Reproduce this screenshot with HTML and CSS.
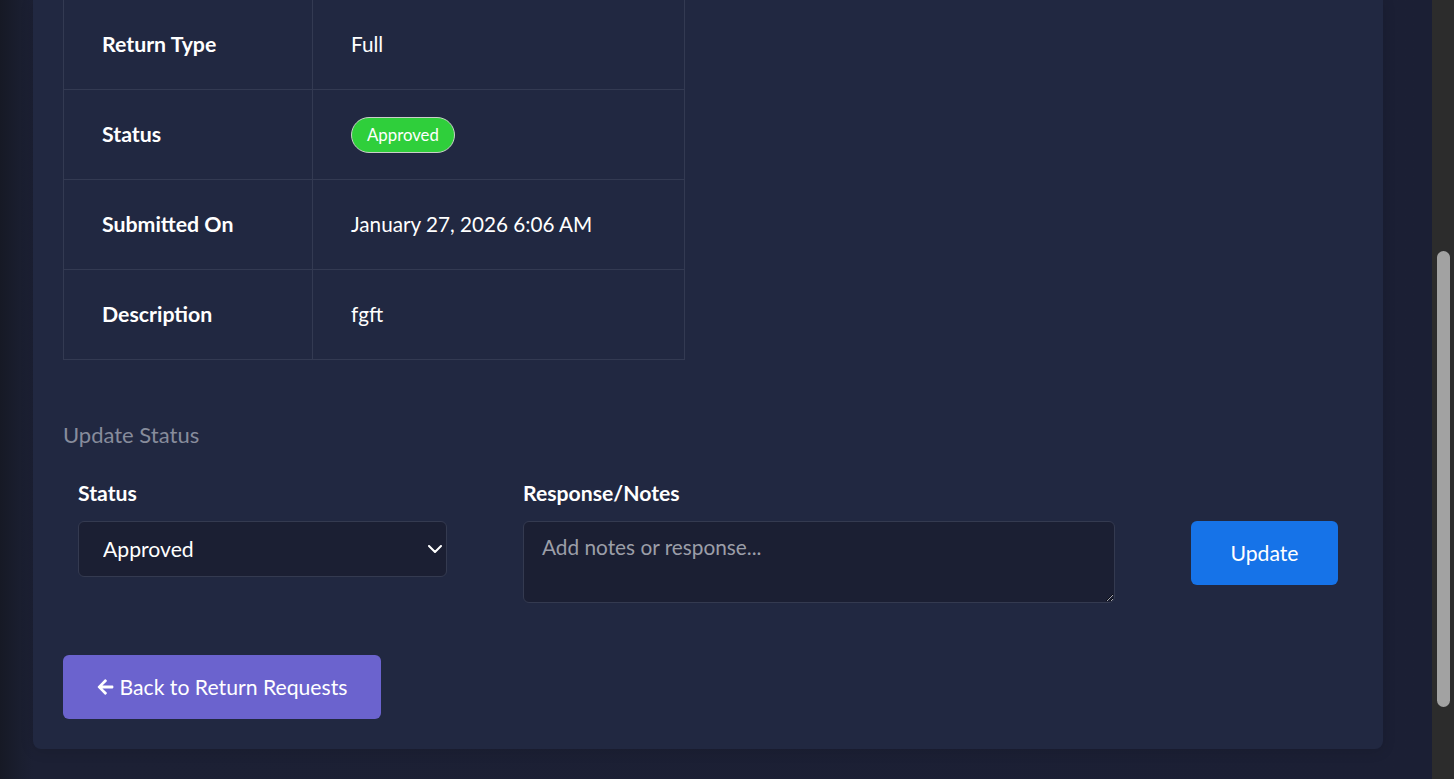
FILE: index.html
```html
<!DOCTYPE html>
<html lang="en">
<head>
<meta charset="utf-8">
<title>Return Request</title>
<link rel="stylesheet" href="styles.css">
</head>
<body>
<div class="page">
  <main class="main">
    <section class="card">
      <table class="detail-table">
        <tbody>
          <tr><td class="key">Return Type</td><td class="val">Full</td></tr>
          <tr><td class="key">Status</td><td class="val"><span class="badge">Approved</span></td></tr>
          <tr><td class="key">Submitted On</td><td class="val">January 27, 2026 6:06 AM</td></tr>
          <tr><td class="key">Description</td><td class="val">fgft</td></tr>
        </tbody>
      </table>

      <h5 class="section-title">Update Status</h5>

      <form class="form-row">
        <div class="field field-status">
          <label class="label" for="status">Status</label>
          <div class="select-wrap">
            <select id="status" class="select">
              <option>Pending</option>
              <option selected>Approved</option>
              <option>Rejected</option>
            </select>
            <svg class="chevron" width="14" height="8" viewBox="0 0 14 8"><path d="M1 1l6 6 6-6" fill="none" stroke="#fff" stroke-width="2" stroke-linecap="round" stroke-linejoin="round"/></svg>
          </div>
        </div>
        <div class="field field-notes">
          <label class="label" for="notes">Response/Notes</label>
          <textarea id="notes" class="textarea" rows="2" placeholder="Add notes or response..."></textarea>
        </div>
        <div class="field field-action">
          <button type="button" class="btn btn-primary">Update</button>
        </div>
      </form>

      <div class="back-row">
        <a class="btn btn-back" href="#"><svg class="arrow" width="17" height="18" viewBox="0 0 448 512"><path fill="#fff" d="M257.5 445.1l-22.2 22.2c-9.4 9.4-24.6 9.4-33.9 0L7 273c-9.4-9.4-9.4-24.6 0-33.9L201.4 44.7c9.4-9.4 24.6-9.4 33.9 0l22.2 22.2c9.5 9.5 9.3 25-.4 34.3L136.6 216H424c13.3 0 24 10.7 24 24v32c0 13.3-10.7 24-24 24H136.6l120.5 114.8c9.8 9.3 10 24.8.4 34.3z"/></svg>Back to Return Requests</a>
      </div>
    </section>
  </main>
  <div class="scrollbar"><div class="thumb"></div></div>
</div>
</body>
</html>
```

FILE: styles.css
```css
* { box-sizing: border-box; }

html, body {
  margin: 0;
  height: 100%;
}

body {
  font-family: "Lato", "Noto Sans", sans-serif;
  font-size: 21px;
  line-height: 30px;
  color: #ffffff;
  background: #1b1f33;
  overflow: hidden;
}

.page {
  display: flex;
  height: 779px;
}

.main {
  flex: 1;
  padding: 0 49px 30px 33px;
  background: linear-gradient(90deg, #161925 0, #1a1e2f 20px, #1c2034 33px, #1b1f34 100%);
}

.card {
  background: #212841;
  border-radius: 0 0 8px 8px;
  padding: 0 30px 30px;
  box-shadow: 0 2px 14px rgba(0, 0, 0, 0.12);
}

.detail-table {
  border-collapse: collapse;
  width: 622px;
}

.detail-table td {
  border: 1px solid #333a52;
  padding: 0 38px;
  height: 90px;
  line-height: 28px;
  vertical-align: middle;
}

.detail-table tr:first-child td {
  border-top: 0;
  height: 89px;
}

.detail-table .key {
  width: 249px;
  font-weight: 700;
  font-size: 21.3px;
}

.detail-table .val {
  font-weight: 400;
  font-size: 20.7px;
}

.badge {
  display: inline-block;
  vertical-align: middle;
  margin: -4px 0;
  padding: 4px 15px;
  font-size: 16.8px;
  line-height: 26px;
  background: #2fcf3b;
  color: #fff;
  border: 1px solid #c9cfc9;
  border-radius: 20px;
}

.section-title {
  margin: 60px 0 0;
  font-size: 22px;
  line-height: 30px;
  font-weight: 400;
  color: #878c9c;
}

.form-row {
  display: flex;
  align-items: flex-start;
  gap: 76px;
  margin: 28px 0 0 15px;
}

.field {
  display: flex;
  flex-direction: column;
}

.field-status { width: 369px; }
.field-notes { width: 592px; }
.field-action { padding-top: 43px; }

.label {
  font-weight: 700;
  font-size: 21.2px;
  line-height: 30px;
  margin-bottom: 13px;
}

.select-wrap {
  position: relative;
}

.select {
  appearance: none;
  -webkit-appearance: none;
  width: 100%;
  height: 56px;
  padding: 0 40px 0 24px;
  font-family: inherit;
  font-size: 21.2px;
  color: #fff;
  background: #1b1f33;
  border: 1px solid #343a50;
  border-radius: 6px;
}

.chevron {
  position: absolute;
  right: 5px;
  top: 24px;
  pointer-events: none;
}

.textarea {
  display: block;
  width: 100%;
  height: 82px;
  padding: 10px 18px;
  font-family: inherit;
  font-size: 20.8px;
  line-height: 30px;
  color: #fff;
  background: #1b1f33;
  border: 1px solid #343a50;
  border-radius: 6px;
  color-scheme: dark;
  resize: vertical;
}

.textarea::placeholder {
  color: #9b9ea8;
  opacity: 1;
}

.btn {
  display: inline-flex;
  align-items: center;
  justify-content: center;
  height: 64px;
  font-family: inherit;
  font-size: 21.2px;
  line-height: 30px;
  color: #fff;
  border: 0;
  border-radius: 6px;
  text-decoration: none;
}

.btn-primary {
  width: 147px;
  background: #1673e8;
}

.back-row {
  margin-top: 52px;
}

.btn-back {
  width: 318px;
  background: #6b63ce;
  gap: 6px;
}

.arrow {
  flex: none;
}

.scrollbar {
  width: 22px;
  flex: none;
  background: #2c2c2c;
  padding: 251px 4px 72px 5px;
  display: flex;
}

.thumb {
  flex: 1;
  background: #a2a2a2;
  border-radius: 7px;
}
```
